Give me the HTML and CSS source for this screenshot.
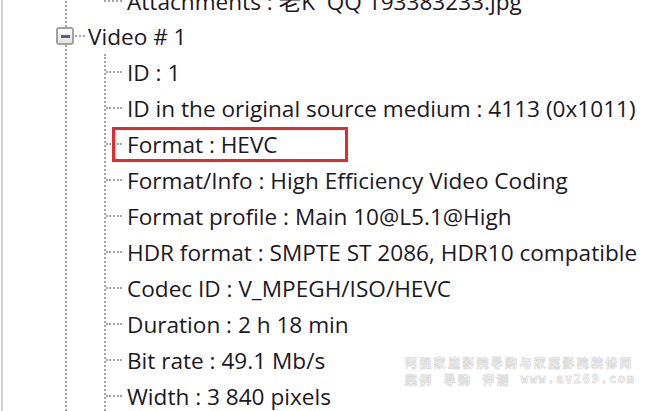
FILE: index.html
```html
<!DOCTYPE html>
<html lang="en">
<head>
    <meta charset="UTF-8">
    <title>MediaInfo - Tree view</title>
    <link rel="stylesheet" href="styles.css">
</head>
<body>
    <div class="pane">
        <div class="tree">
            <div class="children end">
                <div class="leaf last">Attachments : 老K&nbsp; QQ 193383233.jpg</div>
            </div>
            <div class="node">
                <span class="toggle"></span>
                <span class="stub"></span>
                <span class="label">Video # 1</span>
            </div>
            <div class="children">
                <div class="leaf">ID : 1</div>
                <div class="leaf">ID in the original source medium : 4113 (0x1011)</div>
                <div class="leaf marked">Format : HEVC</div>
                <div class="leaf">Format/Info : High Efficiency Video Coding</div>
                <div class="leaf">Format profile : Main 10@L5.1@High</div>
                <div class="leaf">HDR format : SMPTE ST 2086, HDR10 compatible</div>
                <div class="leaf">Codec ID : V_MPEGH/ISO/HEVC</div>
                <div class="leaf">Duration : 2 h 18 min</div>
                <div class="leaf">Bit rate : 49.1 Mb/s</div>
                <div class="leaf">Width : 3 840 pixels</div>
            </div>
        </div>

        <div class="watermark">
            <div class="wm-title">阿强家庭影院导购与家庭影院装修网</div>
            <div class="wm-sub"><span>案例</span><span>导购</span><span>评测</span><span class="wm-url">www.av269.com</span></div>
        </div>
    </div>
</body>
</html>
```

FILE: styles.css
```css
body {
    margin: 0;
    background-color: #fff;
    font-family: "Open Sans", "Noto Sans CJK SC", sans-serif;
    color: #1b181f;
}
.pane {
    position: relative;
    height: 411px;
    overflow: hidden;
    margin-left: 1px;
    border-left: 2px solid #d0d0d0;
}
.tree {
    margin-top: -18px;
    margin-left: 62px;
    border-left: 2px dotted #a4a4a4;
    font-size: 22.6px;
}
.node, .leaf {
    height: 36px;
    display: flex;
    align-items: center;
    white-space: nowrap;
}
.toggle {
    width: 18px;
    height: 18px;
    box-sizing: border-box;
    margin-left: -11px;
    border: 2px solid #a2a2a2;
    border-radius: 3px;
    background: linear-gradient(#fdfdfd, #e2e2e2);
    display: flex;
    align-items: center;
    justify-content: center;
}
.toggle::before {
    content: "";
    width: 9px;
    height: 3px;
    background-color: #55617e;
}
.stub {
    width: 10px;
    margin: 0 3px 0 1px;
    border-top: 2px dotted #a4a4a4;
}
.children {
    margin-left: 37px;
    border-left: 2px dotted #a4a4a4;
}
.children.end {
    border-left-color: transparent;
}
.leaf::before {
    content: "";
    width: 16px;
    margin-right: 5px;
    border-top: 2px dotted #a4a4a4;
}
.leaf.last::before {
    align-self: flex-start;
    height: 18px;
    margin-left: -2px;
    border-top: none;
    border-left: 2px dotted #a4a4a4;
    border-bottom: 2px dotted #a4a4a4;
}
.marked {
    position: relative;
}
.marked::after {
    content: "";
    position: absolute;
    left: 6px;
    top: 1px;
    width: 236px;
    height: 35px;
    box-sizing: border-box;
    border: 3px solid #e42a2a;
}
.watermark {
    position: absolute;
    left: 402px;
    top: 354px;
    color: #fff;
    -webkit-text-stroke: 0.8px #dcdcdc;
    font-family: "Noto Sans CJK SC", sans-serif;
    font-weight: bold;
    font-size: 12px;
    line-height: 17px;
}
.wm-title {
    letter-spacing: 2.3px;
}
.wm-sub {
    display: flex;
    gap: 10px;
    letter-spacing: 2.3px;
}
.wm-url {
    font-family: "DejaVu Sans Mono", monospace;
    font-size: 12px;
    letter-spacing: 1.6px;
}
```
